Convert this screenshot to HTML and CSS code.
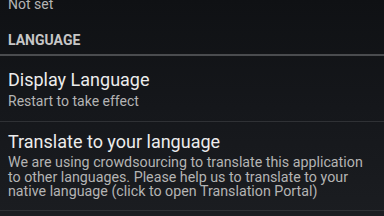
FILE: index.html
```html
<!DOCTYPE html>
<html lang="en">
<head>
  <meta charset="UTF-8" />
  <meta name="viewport" content="width=device-width, initial-scale=1.0"/>
  <title>Settings</title>
  <link rel="stylesheet" href="styles.css">
</head>
<body>

  <!-- previous item, scrolled mostly out of view -->
  <div class="summary first">Not set</div>

  <!-- Language category -->
  <div class="category">LANGUAGE</div>
  <div class="category-line"></div>

  <div class="pref pref-top">
    <div class="title">Display Language</div>
    <div class="summary">Restart to take effect</div>
  </div>
  <div class="line"></div>

  <div class="pref">
    <div class="title">Translate to your language</div>
    <div class="summary long">We are using crowdsourcing to translate this application to other languages. Please help us to translate to your native language (click to open Translation Portal)</div>
  </div>
  <div class="line"></div>

</body>
</html>
```

FILE: styles.css
```css
* { box-sizing: border-box; margin: 0; padding: 0; }
html, body { height: 100%; }
body {
  font-family: Roboto, "Noto Sans", sans-serif;
  background: linear-gradient(180deg, #0f1114 0%, #15171b 50%, #1b1d21 100%);
  color: #e6e6e6;
  overflow: hidden;
}
.summary {
  font-size: 14px; line-height: 16px; color: #b4b4b4;
  padding-left: 8px; margin-top: 3px;
}
.summary.first { margin-top: -4px; }
.summary.long { font-size: 14.25px; line-height: 14.7px; padding-right: 18px; }
.category {
  font-size: 14px; line-height: 16px; font-weight: bold;
  color: #c6c6c6; padding-left: 8px; margin-top: 20px;
}
.category-line { height: 2px; background: #4a4c4f; margin-top: 6px; }
.pref { padding-top: 10px; padding-bottom: 11px; }
.pref-top { padding-top: 14px; padding-bottom: 12px; }
.title {
  font-size: 18px; line-height: 20px; color: #ececec;
  padding-left: 8px;
}
.line { height: 1px; background: #2f3135; }
```
